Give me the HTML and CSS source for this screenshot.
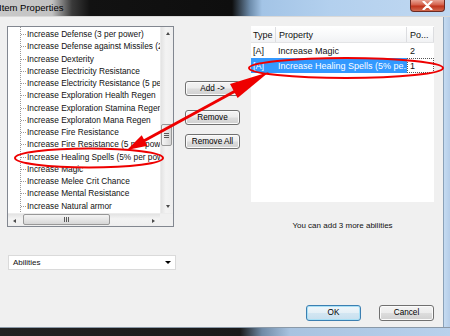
FILE: index.html
```html
<!DOCTYPE html>
<html>
<head>
<meta charset="utf-8">
<title>Item Properties</title>
<link rel="stylesheet" href="styles.css">
</head>
<body>
<div class="window">
  <div class="titlebar">
    <span class="title">Item Properties</span>
    <div class="close"><svg width="11" height="9" viewBox="0 0 11 9"><path d="M1.5 0.5 L9.5 8.5 M9.5 0.5 L1.5 8.5" stroke="#fff" stroke-width="2.2" stroke-linecap="round"/></svg></div>
  </div>
  <div class="body">
    <div class="client">
      <div class="main">
        <div class="left">
          <div class="tree">
            <div class="tree-top">
              <ul class="items">
                <li>Increase Defense (3 per power)</li>
                <li>Increase Defense against Missiles (2 per power)</li>
                <li>Increase Dexterity</li>
                <li>Increase Electricity Resistance</li>
                <li>Increase Electricity Resistance (5 per power)</li>
                <li>Increase Exploration Health Regen</li>
                <li>Increase Exploration Stamina Regen</li>
                <li>Increase Exploraton Mana Regen</li>
                <li>Increase Fire Resistance</li>
                <li>Increase Fire Resistance (5 per power)</li>
                <li>Increase Healing Spells (5% per power)</li>
                <li>Increase Magic</li>
                <li>Increase Melee Crit Chance</li>
                <li>Increase Mental Resistance</li>
                <li>Increase Natural armor</li>
              </ul>
              <div class="vscroll">
                <div class="sb-btn"><span class="tri up"></span></div>
                <div class="vtrack"><div class="vthumb"><span class="grip-h"></span><span class="grip-h"></span><span class="grip-h"></span></div></div>
                <div class="sb-btn"><span class="tri down"></span></div>
              </div>
            </div>
            <div class="hscroll">
              <div class="sb-btn"><span class="tri lt"></span></div>
              <div class="htrack"><div class="hthumb"><span class="grip-v"></span><span class="grip-v"></span><span class="grip-v"></span></div></div>
              <div class="sb-btn"><span class="tri rt"></span></div>
              <div class="corner"></div>
            </div>
          </div>
          <div class="combo"><span>Abilities</span><span class="tri down dark"></span></div>
        </div>
        <div class="mid">
          <button class="btn add">Add -&gt;</button>
          <button class="btn remove">Remove</button>
          <button class="btn">Remove All</button>
        </div>
        <div class="right">
          <div class="listview">
            <div class="lv-row lv-head">
              <div class="c1">Type</div>
              <div class="c2">Property</div>
              <div class="c3">Po...</div>
              <div class="c4"></div>
            </div>
            <div class="lv-row">
              <div class="c1">[A]</div>
              <div class="c2">Increase Magic</div>
              <div class="c3">2</div>
            </div>
            <div class="lv-row sel">
              <div class="c1">[A]</div>
              <div class="c2">Increase Healing Spells (5% pe...</div>
              <div class="c3 focus">1</div>
            </div>
          </div>
          <p class="note">You can add 3 more abilities</p>
        </div>
      </div>
      <div class="footer">
        <button class="btn big default">OK</button>
        <button class="btn big">Cancel</button>
      </div>
    </div>
    <div class="frame-right"></div>
  </div>
  <div class="frame-bottom"></div>
  <svg class="annot" width="450" height="336" viewBox="0 0 450 336">
    <ellipse cx="89" cy="158" rx="74" ry="9.5" fill="none" stroke="#ee0000" stroke-width="2"/>
    <ellipse cx="346" cy="68" rx="97" ry="10" fill="none" stroke="#ee0000" stroke-width="2"/>
    <line x1="140" y1="143" x2="250" y2="83" stroke="#ee0000" stroke-width="3"/>
    <polygon points="269,72 230,84 237.6,98" fill="#ee0000"/>
    <polygon points="127,150 147.5,145.8 141.7,135.2" fill="#ee0000"/>
  </svg>
</div>
</body>
</html>
```

FILE: styles.css
```css
* { box-sizing: border-box; }
html, body { margin: 0; padding: 0; }
body {
  width: 450px;
  height: 336px;
  overflow: hidden;
  font-family: "Liberation Sans", Arial, sans-serif;
  font-size: 9px;
  color: #111;
  background: #f0f0f0;
}
.window {
  position: relative;
  width: 450px;
  height: 336px;
  display: flex;
  flex-direction: column;
}
.titlebar {
  height: 17px;
  flex: none;
  display: flex;
  align-items: flex-start;
  justify-content: space-between;
  background: linear-gradient(to right, #c9c9c9 0, #c2c2c2 52px, #3a3a3a 72px, #121212 90px, #0e0e0e 232px, #6d8cab 250px, #a3c4e6 262px, #b3d0ee 330px, #c0d8f1 100%);
  border-bottom: 1px solid #d9d9d9;
}
.title {
  margin-left: -1px;
  margin-top: 2px;
  font-size: 9.5px;
  color: #000;
}
.close {
  width: 35px;
  height: 12px;
  margin-right: 5px;
  border: 1px solid #6b2a22;
  border-top: none;
  border-radius: 0 0 4px 4px;
  background: linear-gradient(#e8a394 0, #d4604a 45%, #c0341c 55%, #d26a50 100%);
  display: flex;
  align-items: center;
  justify-content: center;
}
.body {
  flex: 1;
  display: flex;
  min-height: 0;
}
.client {
  width: 443px;
  flex: none;
  display: flex;
  flex-direction: column;
  justify-content: space-between;
  padding: 9px 9px 6px 7px;
}
.main {
  display: flex;
  align-items: flex-start;
}
.left {
  width: 169px;
  display: flex;
  flex-direction: column;
}
.tree {
  width: 167px;
  height: 201px;
  border: 1px solid #828790;
  background: #fff;
  display: flex;
  flex-direction: column;
}
.tree-top {
  flex: 1;
  display: flex;
  min-height: 0;
}
.items {
  flex: 1;
  margin: 0;
  padding: 1px 0 0 0;
  list-style: none;
  overflow: hidden;
  font-size: 8.3px;
  background: linear-gradient(#9a9a9a 50%, transparent 50%) 12px 0 / 1px 2px repeat-y;
}
.items li {
  position: relative;
  height: 12.26px;
  line-height: 12.26px;
  padding-left: 19px;
  white-space: nowrap;
  overflow: hidden;
}
.items li::before {
  content: "";
  position: absolute;
  left: 13px;
  top: 6px;
  width: 5px;
  border-top: 1px dotted #9a9a9a;
}
.vscroll {
  width: 13px;
  display: flex;
  flex-direction: column;
  background: linear-gradient(to right, #e3e3e3, #f3f3f3 40%, #eeeeee);
  border-left: 1px solid #ececec;
}
.sb-btn {
  width: 13px;
  height: 13px;
  flex: none;
  display: flex;
  align-items: center;
  justify-content: center;
}
.vtrack {
  flex: 1;
  padding: 84px 1px 0 0;
}
.vthumb {
  height: 22px;
  width: 11px;
  border: 1px solid #989898;
  border-radius: 2px;
  background: linear-gradient(to right, #f4f4f4, #e6e6e6 50%, #d6d6d6);
  display: flex;
  flex-direction: column;
  align-items: center;
  justify-content: center;
  gap: 1px;
}
.grip-h { width: 5px; height: 1px; background: #5a5a5a; }
.hscroll {
  height: 13px;
  flex: none;
  display: flex;
  background: linear-gradient(#e3e3e3, #f3f3f3 40%, #eeeeee);
  border-top: 1px solid #ececec;
}
.htrack {
  flex: 1;
  padding: 0 0 0 2px;
}
.hthumb {
  width: 87px;
  height: 11px;
  border: 1px solid #989898;
  border-radius: 2px;
  background: linear-gradient(#f4f4f4, #e6e6e6 50%, #d6d6d6);
  display: flex;
  align-items: center;
  justify-content: center;
  gap: 1px;
}
.grip-v { width: 1px; height: 5px; background: #5a5a5a; }
.corner { width: 13px; height: 12px; background: #f0f0f0; }
.tri { width: 0; height: 0; display: block; }
.tri.up { border-left: 2.5px solid transparent; border-right: 2.5px solid transparent; border-bottom: 3px solid #4a4a4a; }
.tri.down { border-left: 2.5px solid transparent; border-right: 2.5px solid transparent; border-top: 3px solid #4a4a4a; }
.tri.lt { border-top: 2.5px solid transparent; border-bottom: 2.5px solid transparent; border-right: 3px solid #4a4a4a; }
.tri.rt { border-top: 2.5px solid transparent; border-bottom: 2.5px solid transparent; border-left: 3px solid #4a4a4a; }
.tri.dark { border-left-width: 3px; border-right-width: 3px; border-top: 3.5px solid #000; }
.combo {
  margin: 28px 0 0 1px;
  width: 168px;
  height: 15px;
  border: 1px solid #dadada;
  background: #fff;
  display: flex;
  align-items: center;
  justify-content: space-between;
  padding: 0 4px 0 4px;
  font-size: 8px;
}
.mid {
  width: 55px;
  margin: 55px 11px 0 9px;
  display: flex;
  flex-direction: column;
}
.btn {
  font-family: "Liberation Sans", Arial, sans-serif;
  font-size: 8.2px;
  color: #000;
  width: 55px;
  height: 15px;
  padding: 0;
  border: 1px solid #707070;
  border-radius: 3px;
  background: linear-gradient(#f4f4f4 0, #ececec 48%, #dddddd 52%, #d0d0d0 100%);
  box-shadow: inset 0 0 0 1px #fbfbfb;
  line-height: 12px;
}
.btn.remove { margin-top: 14px; }
.btn.remove + .btn { margin-top: 9px; }
.right {
  width: 185px;
  display: flex;
  flex-direction: column;
  align-items: stretch;
}
.listview {
  height: 176px;
  background: #fff;
  padding-top: 1px;
}
.lv-row {
  display: flex;
  height: 15px;
  align-items: center;
}
.lv-head {
  height: 16px;
  background: linear-gradient(#ffffff, #f7f8f9 60%, #f1f2f4);
  border-bottom: 1px solid #e3e4e6;
}
.c1, .c2, .c3 { height: 100%; display: flex; align-items: center; white-space: nowrap; overflow: hidden; }
.c1 { width: 25px; padding-left: 2px; }
.c2 { width: 131px; padding-left: 2px; }
.c3 { width: 27px; padding-left: 3px; }
.c4 { flex: 1; }
.lv-head .c1, .lv-head .c2, .lv-head .c3 { border-right: 1px solid #dcdde0; }
.lv-head .c2 { padding-left: 3px; }
.lv-head .c3 { padding-left: 3px; }
.sel .c1, .sel .c2 { background: #3399ff; color: #fff; }
.sel .c3.focus { border: 1px dotted #555; padding-left: 2px; }
.note {
  margin: 19px 0 0 0;
  text-align: center;
  font-size: 8px;
  line-height: 10px;
}
.footer {
  display: flex;
  justify-content: flex-end;
  gap: 18px;
}
.btn.big { height: 16px; }
.btn.default {
  border-color: #3c7fb1;
  box-shadow: inset 0 0 0 1px #a8e0f6;
  background: linear-gradient(#f0f7fb 0, #e4eff6 48%, #d2e6f2 52%, #c8dfee 100%);
}
.frame-right {
  flex: 1;
  border-left: 1px solid #8aa1b8;
  background: linear-gradient(to right, #c5dbf1, #b5cde8);
}
.frame-bottom {
  height: 9px;
  flex: none;
  border-top: 1px solid #8a99a8;
  background: linear-gradient(to right, #222 0, #1a1a1a 240px, #6f8aa6 262px, #a8c3e0 290px, #b9d1ec 100%);
}
.annot {
  position: absolute;
  left: 0;
  top: 0;
  pointer-events: none;
}
```
